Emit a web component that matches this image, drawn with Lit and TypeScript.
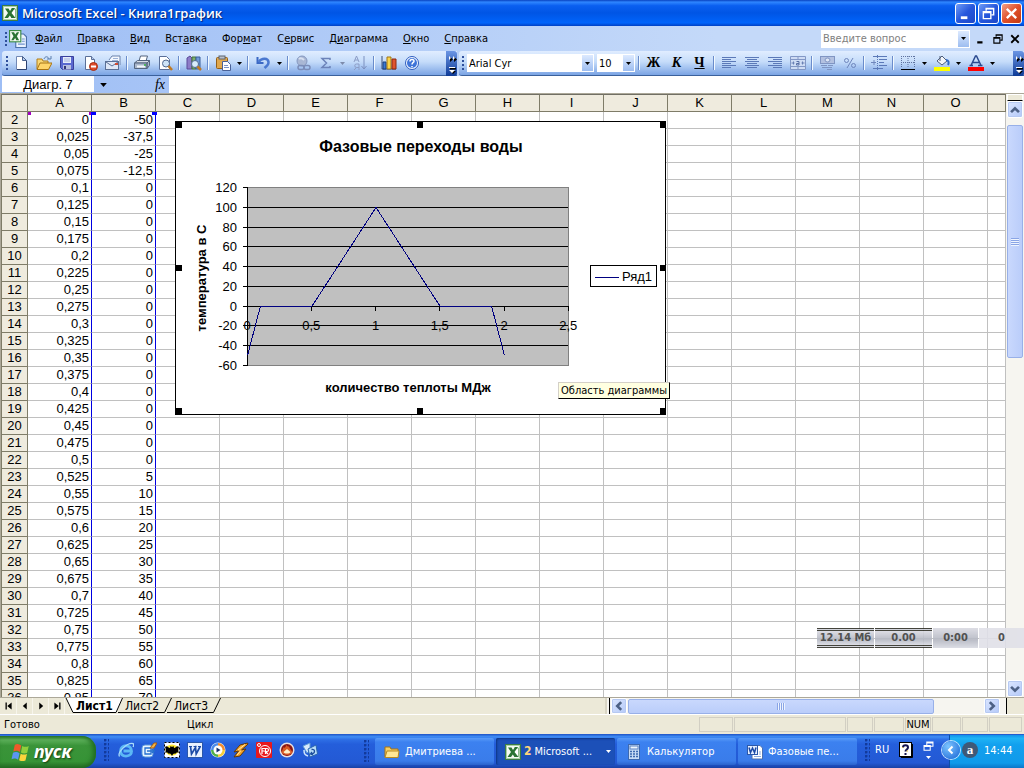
import { LitElement, html, svg, css } from "lit";
import { customElement, state } from "lit/decorators.js";
import { classMap } from "lit/directives/class-map.js";

const glyphs: Record<string, unknown> = {
  excel: svg`<rect x=".5" y=".5" width="15" height="15" fill="#f4faf2" stroke="#3c7c45"/><rect x="1.500" y="1.500" width="13" height="13" fill="none" stroke="#a9cfa6"/><path d="M9 4h4.500v8.500H9" fill="#fff" stroke="#8db98d"/><path d="M3 3.500h3.500L8 6l2-3h3l-3.500 5 4 5H9.500L7.800 10.500 6 13H2.500L6 8z" fill="#2a7333"/>`,
  book: svg`<path d="M6 3.500h7l2.500 2.500v9.500H6z" fill="#eaf2ff" stroke="#4a6fa8"/><path d="M11.500 8H14M11.500 10H14M8 12.500h6" stroke="#6f92cc"/><rect x=".5" y=".5" width="10" height="10" fill="#f4faf2" stroke="#3c8c45"/><path d="M2 2h2.500l1 2 1.500-2h2L7 5.500 9 9H6.500l-1-2-1.500 2H2l2-3.500z" fill="#2a7333"/>`,
  new: svg`<path d="M3.500 1.500h6l4 4v9h-10z" fill="#fff" stroke="#7288b4"/><path d="M9.500 1.500v4h4z" fill="#b7cdf2" stroke="#48608c"/><path d="M4 14.500h9.500V6" stroke="#2c4270" fill="none"/>`,
  open: svg`<path d="M1 14V4h5l1 2h5v2" fill="#f8d775" stroke="#b07d1a"/><path d="M1 14.500L4 8h12l-3.500 6.500z" fill="#ffd56a" stroke="#a87414"/><path d="M8 4c1-3 4-3 5 0M11 4h4V1" fill="none" stroke="#5d7fae"/>`,
  save: svg`<path d="M1.500 1.500h13v13h-11l-2-2z" fill="#5a68cf" stroke="#3a3f9c"/><rect x="4" y="2" width="8" height="6" fill="#e6ecfb"/><path d="M5 4h6M5 6h6" stroke="#a4b2dd"/><rect x="4" y="10" width="8" height="4.500" fill="#b7bedf"/><rect x="5" y="11" width="2" height="3" fill="#303577"/>`,
  perm: svg`<path d="M3.500 1.500h6l3 3v10h-9z" fill="#fff" stroke="#5a6f98"/><path d="M9.500 1.500v3h3" fill="#b7cdf2" stroke="#5a6f98"/><circle cx="11.500" cy="11.500" r="4" fill="#df4b2a" stroke="#a52d14"/><path d="M9 11.500h5" stroke="#fff" stroke-width="2"/>`,
  mail: svg`<path d="M4 5l3-4h8v9" fill="#f4f8ff" stroke="#6b82ab"/><path d="M8 3.500h5M7 5.500h6" stroke="#9db2d6"/><rect x=".5" y="6.500" width="13" height="8" fill="#dfe8f7" stroke="#5b7096"/><path d="M1 7l6 4 6-4" fill="none" stroke="#5b7096"/><rect x="10" y="8" width="3" height="2" fill="#d24b32"/>`,
  print: svg`<path d="M5 6l1.500-5h7L12 6" fill="#fff" stroke="#54647e"/><path d="M.5 8l3-2.500h12l-2 2.500z" fill="#d8dee8" stroke="#54647e"/><path d="M.5 8h12.500v5.500H.5zM13 8l2.500-2.500v5l-2.500 3z" fill="#aab7cc" stroke="#54647e"/><path d="M3 11.500h8" stroke="#f4f7fb" stroke-width="2"/><path d="M10 10h2" stroke="#2fae3a" stroke-width="1.500"/>`,
  preview: svg`<path d="M2.500 1.500h7l3 3v10h-10z" fill="#fff" stroke="#5a6f98"/><circle cx="9" cy="8.500" r="3.500" fill="#cfe4f7" stroke="#51698f"/><path d="M11.500 11l3.500 4" stroke="#c17a22" stroke-width="2.500"/>`,
  research: svg`<path d="M1 3l3-2 2 2v11H1z" fill="#8d7cc8" stroke="#5a4a99"/><path d="M6 2h4v12H6z" fill="#7fb06c" stroke="#42733a"/><path d="M10 2h4v12h-4z" fill="#6e9ad8" stroke="#395e9c"/><circle cx="9" cy="9" r="3.500" fill="#d8ecfa" stroke="#51698f"/><path d="M11.500 11.500l3.500 3.500" stroke="#c17a22" stroke-width="2.500"/>`,
  paste: svg`<rect x="1.500" y="2.500" width="11" height="11" rx="1" fill="#e0a84e" stroke="#946018"/><rect x="4" y="1" width="6" height="3" fill="#b9bfc9" stroke="#5c6470"/><path d="M7.500 6.500h5l3 3v6h-8z" fill="#fff" stroke="#4a6298"/><path d="M9 10.500h4M9 12.500h5" stroke="#7892c6"/>`,
  undo: svg`<path d="M2.500 2v6h6" fill="none" stroke="#3b68c4" stroke-width="2"/><path d="M3.500 7C7 2.500 13 3 13.500 7c.4 3-2 4-4 6" fill="none" stroke="#4a78d0" stroke-width="2.500"/>`,
  link: svg`<circle cx="7" cy="6" r="5" fill="#a9b7d4" stroke="#8598c0"/><path d="M4 4c2-2 4 0 5 1" stroke="#d8e0f0" stroke-width="2" fill="none"/><rect x="3" y="10.500" width="6" height="4" rx="2" fill="none" stroke="#7b8db8" stroke-width="1.500"/><rect x="9" y="10.500" width="6" height="4" rx="2" fill="none" stroke="#7b8db8" stroke-width="1.500"/>`,
  sum: svg`<path d="M12 5V3.500H4L8.500 8 4 12.500h8V11" fill="none" stroke="#6c83b9" stroke-width="1.500"/>`,
  sort: svg`<path d="M2 7l2.500-6L7 7M3 5h3M7 15V9H4.500a1.500 1.500 0 0 0 0 3.500H7M4.500 12.500L2 15" fill="none" stroke="#8c9dc6"/><path d="M12 1v13M9.500 11l2.500 3 2.500-3" fill="none" stroke="#7d91c0"/>`,
  chart: svg`<path d="M1 1v13h14" stroke="#3c5078" fill="none"/><path d="M2 7h3v7H2z" fill="#3b78d4" stroke="#1c4380"/><path d="M6 2h4v12H6z" fill="#fbd54a" stroke="#a07413"/><path d="M11 4h4v10h-4z" fill="#e0532f" stroke="#8c2a10"/>`,
  help: svg`<circle cx="8" cy="8" r="6.500" fill="#f2f7ff" stroke="#2e5dc0"/><circle cx="8" cy="8" r="5" fill="#3f74d8"/><path d="M6 6.500C6 4 10 4 10 6.200 10 7.500 8 7.500 8 9.500M8 11v1.200" fill="none" stroke="#fff" stroke-width="1.500"/>`,
  left: svg`<path d="M1 2.500h14M1 4.500h9M1 6.500h14M1 8.500h9M1 10.500h14M1 12.500h9" stroke="#5b79b8"/>`,
  center: svg`<path d="M1 2.500h14M3 4.500h10M1 6.500h14M3 8.500h10M1 10.500h14M3 12.500h10" stroke="#5b79b8"/>`,
  right: svg`<path d="M1 2.500h14M6 4.500h9M1 6.500h14M6 8.500h9M1 10.500h14M6 12.500h9" stroke="#5b79b8"/>`,
  merge: svg`<path d="M.5 1.500h15v13H.5zM.5 4.500h15M.5 11.500h15M8 1.500v3M8 11.500v3" fill="#cfdcf4" stroke="#8398c6"/><path d="M1.500 8h3M3.500 6.500v3M14.500 8h-3M12.500 6.500v3" stroke="#6a80b4"/><path d="M6.500 6.500h2.500v3.500H6.500V8.500H9" fill="none" stroke="#5a70a6"/>`,
  money: svg`<rect x="1.500" y="1.500" width="14" height="7" fill="#b3c1e0" stroke="#8095c3"/><ellipse cx="8.500" cy="5" rx="2.500" ry="2" fill="#dde6f6" stroke="#8095c3"/><path d="M2 10.500h6M3 12.500h5M8 12.500h5M8 14.500h5M9 10.500h5" stroke="#8095c3"/>`,
  percent: svg`<circle cx="4.500" cy="5.500" r="2" fill="none" stroke="#6f86bc"/><circle cx="11.500" cy="10.500" r="2" fill="none" stroke="#6f86bc"/><path d="M11 3L5 13" stroke="#6f86bc"/>`,
  indent: svg`<path d="M2 1.500h14M2 13.500h10M8 4.500h8M8 7.500h5M8 10.500h8" stroke="#5b79b8"/><path d="M6.500 0v15" stroke="#5b79b8" stroke-dasharray="1 1"/><path d="M0 7.500h5M3 5v5" stroke="#6f86bc"/>`,
  borders: svg`<path d="M1.500 1v12M8 1v12M14.500 1v12M1 1.500h14M1 7.500h14" stroke="#5f73a0" stroke-dasharray="1 1" fill="none"/><path d="M1 14.500h14" stroke="#000"/>`,
  fill: svg`<path d="M3 6l5-5 5 5-5 4z" fill="#f3f6fb" stroke="#4f5f7c"/><path d="M6 1v5" stroke="#4f5f7c"/><path d="M12 5c3 0 3 3 2 5" fill="none" stroke="#2b67c6" stroke-width="2"/><rect y="12" width="16" height="4" fill="#ff0"/>`,
  fontcolor: svg`<path d="M3 10.500L7.500 1h1L13 10.500M5 7.500h6M1.500 10.500H5M10 10.500h4.500" fill="none" stroke="#2b4a8f" stroke-width="1.500"/><rect y="12" width="16" height="4" fill="red"/>`,
  folder: svg`<path d="M1 13V3h5l1 2h7v8z" fill="#f5cf62" stroke="#a87414"/><path d="M1 13.500L3 7h12l-1 6.500z" fill="#ffe795" stroke="#b98a22"/>`,
  calc: svg`<rect x="2.500" y=".5" width="11" height="15" fill="#c9dcf5" stroke="#3e69b0"/><rect x="4" y="2" width="8" height="3" fill="#eef6ff" stroke="#5a82c4"/><path d="M4 7.500h8M4 10h8M4 12.500h8" stroke="#3e69b0" stroke-dasharray="2 1" stroke-width="1.500"/>`,
  word: svg`<path d="M5 1.500h8l2.500 2.500v11H5z" fill="#fff" stroke="#4a6fb0"/><path d="M12 8h2M12 10h2M7 12.500h7" stroke="#8daade"/><rect x=".5" y="1.500" width="10" height="9" fill="#e4eeff" stroke="#2b57a8"/><path d="M2 3.500l1.500 5L5.500 4l2 4.500 1.500-5" fill="none" stroke="#1c4aa6" stroke-width="1.500"/>`,
  ie: svg`<path d="M13.500 10.500C12.500 15 3 16 2.500 9 2.500 2 13.500 2 13.500 9H5.500" fill="none" stroke="#5cb8f5" stroke-width="2.800"/><path d="M1.500 14.500C-1 10 9 1 14.500 1.500c1.500 0 1.500 2 .5 3.500" fill="none" stroke="#a9dcfa" stroke-width="1.300"/>`,
  outlook: svg`<rect x="1" y="3" width="11" height="12" rx="3" fill="#e8f4ff" stroke="#5f9bd8"/><path d="M4 6h6v6H4zM6 9h7M11 7l2.500 2L11 11" fill="none" stroke="#246fd0" stroke-width="1.300"/><path d="M9 6l4-5h3l-3 5z" fill="#f6b544" stroke="#a65d14"/>`,
  bat: svg`<rect x=".5" y=".5" width="15" height="15" fill="#fff" stroke="#000" stroke-dasharray="2 2"/><ellipse cx="8" cy="8" rx="6.500" ry="5.500" fill="#ffe92e"/><path d="M1 5c2-2 3 1 5 1l.5-2L8 5l1.500-1 .5 2c2 0 3-3 5-1-1 2-1 4 0 6-2-1-3 0-4 1-1-1-2 0-3 2-1-2-2-3-3-2-1-1-2-2-4-1 1-2 1-4 0-6z" fill="#000"/>`,
  wordapp: svg`<rect x=".5" y=".5" width="15" height="15" fill="#e9f1ff" stroke="#2b57a8"/><path d="M2 4.500h3M6.500 4.500h3M11 4.500h3" stroke="#1c4aa6"/><path d="M3.500 4.500l1 7.500 4-6.500.7 6.500 4-7.500" fill="none" stroke="#1c4aa6" stroke-width="1.700"/>`,
  player: svg`<circle cx="8" cy="8" r="7.500" fill="#eef4fb"/><path d="M8 1a7 7 0 0 1 7 7H8z" fill="#f08a2c"/><path d="M1 8a7 7 0 0 1 7-7v7z" fill="#4c8be8"/><path d="M1 8a7 7 0 0 0 7 7V8z" fill="#53b04a"/><path d="M15 8a7 7 0 0 1-7 7V8z" fill="#f6cd38"/><circle cx="8" cy="8" r="4.500" fill="#fff"/><path d="M6.500 5.500v5l4-2.500z" fill="#16306c"/>`,
  bolt: svg`<path d="M14.500 1L7 3 1 10l4.500-1L1 15l6-1 6-7-4.500 1 6.500-6z" fill="#f6a52a" stroke="#5f3608"/><path d="M12 2.500L5 8M8 8.500L4 13" stroke="#ffe9b0"/>`,
  red: svg`<rect width="16" height="16" rx="1" fill="#e8181c"/><circle cx="9" cy="9" r="5.500" fill="none" stroke="#fff"/><circle cx="3" cy="3" r="1.500" fill="none" stroke="#fff"/><path d="M6 12V6.500h3M6 9h2.500M9.500 12V6.500h1.500c2 0 2 3 0 3H9.500l2.500 2.500" fill="none" stroke="#fff" stroke-width="1.200"/>`,
  flame: svg`<circle cx="8" cy="8" r="7.500" fill="#e7dfe0"/><circle cx="8" cy="8" r="6" fill="#8a1512"/><path d="M2.500 10c1-2 1-2 2-5 1 2 2 0 3-2 1 3 3 0 3 3l3 4c-1 4-10 4-11 0z" fill="#d95a22"/><path d="M4.500 10l3.500-3 3.500 3c-1 2-6 2-7 0z" fill="#fff0c8"/>`,
  sync: svg`<path d="M1 4l7-3v8L5 11z" fill="#d7e9fb" stroke="#5e9bd8"/><path d="M6 7l8-4 1.500 9L8 15z" fill="#b8dcf8" stroke="#2864ae"/><path d="M2 8c0 4 1 5 4 6" fill="none" stroke="#cfe6fb" stroke-width="1.500"/><path d="M9.500 7.500c4-1 4 4 0 4.500M10 10l-1.500 2 2.500 1" fill="none" stroke="#1b4d9c" stroke-width="1.300"/>`,
  flag: svg`<path d="M4 2.500C6 1 8 2 9.500 3L8.300 8.500C7 7.500 5 7 2.800 8z" fill="#ee5a2a"/><path d="M10.300 3.300c2 1 3.500 1 5.500 0L14.500 9c-2 1-3.500.8-5.300-.2z" fill="#8fcf3c"/><path d="M2.500 9C4.500 8 6.500 8.500 8 9.500L6.800 15c-1.500-1-3.500-1.500-5.500-.5z" fill="#5b96f2"/><path d="M9 9.800c1.800 1 3.500 1 5.300.2L13 15.500c-2 1-3.500.8-5.300-.2z" fill="#fcd43c"/>`,
  query: svg`<rect x="1.500" y=".5" width="12" height="14" fill="#fff" stroke="#000"/><path d="M14.500 2v13.500H3" fill="none" stroke="#000"/><path d="M5 5.500c0-3 5-3 5 0 0 2-2.500 2-2.500 4M7.500 11v2" fill="none" stroke="#141450" stroke-width="2"/><path d="M4 5.500h1M8.500 9h1.500" stroke="#e8c53a"/>`,
  windows: svg`<path d="M5.500 1.500h9v6h-9zM5 3h10M1.500 6.500h9v7h-9zM1 8h10" fill="none" stroke="currentColor" stroke-width="1.500"/>`,
  first: svg`<path d="M4 4h1.500v8H4zM11 4v8L6 8z" fill="#000"/>`,
  prev: svg`<path d="M10 4v8L5.500 8z" fill="#000"/>`,
  next: svg`<path d="M6 4v8l4.500-4z" fill="#000"/>`,
  last: svg`<path d="M10.500 4H12v8h-1.500zM5 4v8l5-4z" fill="#000"/>`,
  up: svg`<path d="M3.500 10.500L8 6l4.500 4.500" fill="none" stroke="#4d6185" stroke-width="3"/>`,
  down: svg`<path d="M3.500 5.500L8 10l4.500-4.500" fill="none" stroke="#4d6185" stroke-width="3"/>`,
  back: svg`<path d="M10.500 3.500L6 8l4.500 4.500" fill="none" stroke="#4d6185" stroke-width="3"/>`,
  forth: svg`<path d="M5.500 3.500L10 8l-4.500 4.500" fill="none" stroke="#4d6185" stroke-width="3"/>`,
  min: svg`<path d="M3 12.500h7" stroke="currentColor" stroke-width="3"/>`,
  restore: svg`<path d="M5.500 5V2.500h8v7H11M5 3h9" fill="none" stroke="currentColor" stroke-width="1.500"/><path d="M2.500 6h8v7.500h-8zM2 7h9" fill="none" stroke="currentColor" stroke-width="1.500"/>`,
  close: svg`<path d="M3 3l10 10M13 3L3 13" stroke="currentColor" stroke-width="2.500"/>`,
};

const icon = (name: string, size = 16) =>
  html`<svg width=${size} height=${size} viewBox="0 0 16 16" aria-hidden="true">${glyphs[name]}</svg>`;

const arrow = html`<svg width="5" height="3" viewBox="0 0 5 3" aria-hidden="true"><path d="M0 0h5L2.500 3z" fill="currentColor" /></svg>`;

const overflowMark = html`<svg width="10" height="20" viewBox="0 0 10 20" aria-hidden="true">
  <path d="M3 3l3 2.500L3 8zM7 3l3 2.500L7 8zM3 14h6v1.500H3zM3 17h6l-3 3z" fill="#000" />
  <path d="M2 2l2 2-2 2zM6 2l2 2-2 2zM2 13h6v1H2zM2 16h6l-3 3z" fill="#fff" /></svg>`;

type Tool = [kind: string, label?: string];

const standardTools: Tool[] = [
  ["new", "Создать"], ["open", "Открыть"], ["save", "Сохранить"], ["perm", "Разрешения"], ["mail", "Сообщение"], ["|"],
  ["print", "Печать"], ["preview", "Просмотр"], ["|"], ["research", "Справочники"], ["|"],
  ["paste", "Вставить"], ["v", "Параметры вставки"], ["|"], ["undo", "Отменить"], ["v", "Список отмены"], ["|"],
  ["link", "Гиперссылка"], ["sum", "Автосумма"], ["v-", "Функции"], ["sort", "Сортировка"], ["|"],
  ["chart", "Мастер диаграмм"], ["help", "Справка"],
];

const formatTools: Tool[] = [
  ["|"], ["Ж", "Полужирный"], ["К", "Курсив"], ["Ч", "Подчеркнутый"], ["|"],
  ["left", "По левому краю"], ["center", "По центру"], ["right", "По правому краю"], ["merge", "Объединить"], ["|"],
  ["money", "Денежный формат"], ["percent", "Процентный формат"], ["|"], ["indent", "Отступ"], ["|"],
  ["borders", "Границы"], ["v", "Виды границ"], ["fill", "Цвет заливки"], ["v", "Палитра заливки"],
  ["fontcolor", "Цвет шрифта"], ["v", "Палитра шрифта"],
];

const drawTool = ([kind, label]: Tool) => {
  if (kind === "|") return html`<span class="sep"></span>`;
  if (kind[0] === "v") return html`<button class=${classMap({ drop: true, dim: kind === "v-" })} aria-label=${label}>${arrow}</button>`;
  if ("ЖКЧ".includes(kind))
    return html`<button class=${classMap({ tool: true, letter: true, italic: kind === "К", under: kind === "Ч" })} aria-label=${label}>${kind}</button>`;
  return html`<button class="tool" aria-label=${label}>${icon(kind)}</button>`;
};

const base = css`
  * { box-sizing: border-box; }
  button { font: inherit; color: inherit; padding: 0; margin: 0; border: 0; background: none; display: flex; align-items: center; justify-content: center; flex: none; }
  svg { display: block; flex: none; }
  a { color: inherit; text-decoration: none; }
`;

@customElement("excel-toolbars")
class ExcelToolbars extends LitElement {
  static styles = [base, css`
    :host { display: block; background: linear-gradient(90deg, #9ebef5, #c4d9f9 70%); }
    .menu { display: flex; align-items: center; height: 25px; padding-left: 5px; }
    .grip { width: 2px; height: 14px; flex: none; background: repeating-linear-gradient(#2f4f9c 0 2px, transparent 2px 4px); }
    .menu .book { margin: 0 8px 0 2px; }
    nav { display: flex; gap: 15px; flex: 1; }
    u { text-underline-offset: 1px; }
    .ask { display: flex; align-items: center; height: 18px; width: 149px; background: #fff; }
    .ask input { flex: 1; min-width: 0; border: 0; padding: 0 2px; outline: 0; font: inherit; background: none; height: 16px; }
    .ask input::placeholder { color: #808080; opacity: 1; }
    .picker { width: 11px; align-self: stretch; margin: 1px; background: linear-gradient(#ddeaff, #9dbdf0); }
    .doc { display: flex; gap: 5px; padding: 0 3px 0 5px; }
    .bars { display: flex; height: 25px; gap: 2px; padding-left: 2px; }
    .bar { display: flex; align-items: center; background: linear-gradient(#e0edff, #c5dcfa 45%, #7ba4e4); border-bottom: 1px solid #3b619c; border-radius: 3px 0 0 3px; padding-left: 4px; }
    .std { width: 455px; flex: none; }
    .fmt { flex: 1; min-width: 0; padding-left: 3px; }
    .std .grip { margin-right: 1px; }
    .tool { width: 23px; height: 22px; }
    .drop { width: 11px; height: 22px; }
    .dim { color: #7d8bab; }
    .letter { font: bold 14px "Liberation Serif", serif; }
    .italic { font-style: italic; }
    .under { text-decoration: underline; }
    .sep { width: 2px; height: 14px; margin: 0 2px; flex: none; border-left: 1px solid #6a8ccb; border-right: 1px solid #f1f9ff; }
    .more { margin-left: auto; width: 11px; height: 25px; margin-bottom: -1px; background: linear-gradient(#6b95e4, #0d3a96); border-radius: 0 3px 3px 0; }
    .combo { display: flex; height: 18px; background: #fff; align-items: center; margin-left: 3px; }
    .combo select { flex: 1; min-width: 0; appearance: none; border: 0; background: none; padding: 0 0 0 2px; font: inherit; color: #000; outline: 0; }
    .size { width: 38px; margin-right: 1px; }
    .family { width: 127px; }
    .formula { display: flex; height: 17px; padding-left: 2px; }
    .formula input { border: 0; outline: 0; background: #fff; padding: 0; }
    .formula .name { width: 92px; height: 16px; text-align: center; font: 13px "Liberation Sans", sans-serif; }
    .namedrop { width: 18px; }
    .namedrop svg { width: 7px; height: 4px; }
    .fx { margin-left: auto; width: 18px; font: italic 14px "Liberation Serif", serif; }
    .left { display: flex; width: 75px; flex: none; }
    .expr { flex: 1; min-width: 0; }
  `];

  render() {
    const menus = [["", "Ф", "айл"], ["", "П", "равка"], ["", "В", "ид"], ["Вст", "а", "вка"], ["Фор", "м", "ат"], ["С", "е", "рвис"], ["Д", "и", "аграмма"], ["", "О", "кно"], ["", "С", "правка"]];
    return html`
      <div class="menu">
        <span class="grip"></span><span class="book">${icon("book", 18)}</span>
        <nav>${menus.map(([a, b, c]) => html`<a href="#">${a}<u>${b}</u>${c}</a>`)}</nav>
        <div class="ask"><input aria-label="Вопрос" placeholder="Введите вопрос" /><button class="picker" aria-label="Список вопросов">${arrow}</button></div>
        <div class="doc">
          <button aria-label="Свернуть книгу">${icon("min", 12)}</button>
          <button aria-label="Восстановить книгу">${icon("restore", 12)}</button>
          <button aria-label="Закрыть книгу">${icon("close", 12)}</button>
        </div>
      </div>
      <div class="bars">
        <div class="bar std"><span class="grip"></span>${standardTools.map(drawTool)}
          <button class="more" aria-label="Другие кнопки">${overflowMark}</button></div>
        <div class="bar fmt"><span class="grip"></span>
          <span class="combo family"><select aria-label="Шрифт"><option>Arial Cyr</option></select><button class="picker" aria-label="Список шрифтов">${arrow}</button></span>
          <span class="combo size"><select aria-label="Размер"><option>10</option></select><button class="picker" aria-label="Список размеров">${arrow}</button></span>
          ${formatTools.map(drawTool)}
          <button class="more" aria-label="Другие кнопки форматирования">${overflowMark}</button></div>
      </div>
      <div class="formula">
        <input class="name" aria-label="Имя" value="Диагр. 7" />
        <span class="left"><button class="namedrop" aria-label="Список имён">${arrow}</button><button class="fx" aria-label="Вставка функции">fx</button></span>
        <input class="expr" aria-label="Строка формул" />
      </div>`;
  }
}

@customElement("phase-chart")
class PhaseChart extends LitElement {
  static styles = [base, css`
    :host { display: block; background: #fff; border: 1px solid #000; }
    text { font: 13px "Liberation Sans", sans-serif; fill: #000; }
    .title { font-size: 16px; font-weight: bold; }
    .bold { font-weight: bold; }
    .end { text-anchor: end; }
    .mid { text-anchor: middle; }
    .axis { stroke: #000; fill: none; shape-rendering: crispEdges; }
    .frame { stroke: #808080; fill: #c0c0c0; shape-rendering: crispEdges; }
    .series { stroke: #000080; fill: none; shape-rendering: crispEdges; }
    .box { stroke: #000; fill: #fff; shape-rendering: crispEdges; }
  `];

  render() {
    const x = (v: number) => 71 + v * 128.5;
    const y = (v: number) => Math.round(65 + (120 - v) * 0.989) + 0.5;
    const levels = [120, 100, 80, 60, 40, 20, 0, -20, -40, -60];
    const marks = [0, 0.5, 1, 1.5, 2, 2.5];
    const points = [[0, -50], [0.1, 0], [0.5, 0], [1, 100], [1.5, 0], [1.9, 0], [2, -50]];
    const handles = [0, 241, 484].flatMap((hx) => [0, 143, 286].map((hy) => [hx, hy])).filter(([hx, hy]) => hx !== 241 || hy !== 143);
    return html`<svg width="489" height="292" viewBox="0 0 489 292" role="img" aria-label="Фазовые переходы воды">
      <rect class="frame" x="71.500" y="65.500" width="321" height="178"></rect>
      ${levels.slice(1, -1).map((v) => svg`<path class="axis" d="M67 ${y(v)}H392"/>`)}
      ${levels.map((v) => svg`<path class="axis" d="M67 ${y(v)}h4"/><text class="end" x="61" y=${y(v) + 4.5}>${v}</text>`)}
      <path class="axis" d="M71.500 65v179"></path>
      ${marks.map((v) => svg`<path class="axis" d="M${Math.floor(x(v)) + 0.5} 184v5"/><text class="mid" x=${x(v)} y="208">${String(v).replace(".", ",")}</text>`)}
      <polyline class="series" points=${points.map(([a, b]) => `${x(a) + 0.5},${y(b)}`).join(" ")}></polyline>
      <text class="title mid" x="245" y="30">Фазовые переходы воды</text>
      <text class="bold mid" x="232" y="270">количество теплоты МДж</text>
      <text class="bold mid" transform="translate(30 156) rotate(-90)">температура в С</text>
      <rect class="box" x="414.500" y="143.500" width="66" height="21"></rect>
      <path class="series" d="M419 155.500h24"></path>
      <text x="446" y="159">Ряд1</text>
      ${handles.map(([hx, hy]) => svg`<rect x=${hx} y=${hy} width="6" height="6"/>`)}
    </svg>`;
  }
}

@customElement("excel-sheet")
class ExcelSheet extends LitElement {
  static styles = [base, css`
    :host { display: flex; min-height: 0; background: #fff; }
    .grid { flex: 1; min-width: 0; position: relative; overflow: hidden; border-left: 1px solid #aca899; border-top: 1px solid #aca899; }
    table { width: 100%; table-layout: fixed; border-collapse: separate; border-spacing: 0; font: 13px/16px "Liberation Sans", sans-serif; }
    col.n { width: 27px; }
    col.c { width: 64px; }
    th, td { height: 17px; padding: 0; border-right: 1px solid #c0c0c0; border-bottom: 1px solid #c0c0c0; font-weight: normal; overflow: hidden; white-space: nowrap; }
    th { background: #efebde; border-color: #7f7c68; text-align: center; }
    thead th { height: 18px; border-top: 1px solid #716f64; }
    th:first-child { border-left: 1px solid #7f7c68; }
    td { text-align: right; padding-right: 2px; }
    .marked { border-right-color: #0000e0; }
    .object, .hint, .knob { position: absolute; }
    .object { left: 174px; top: 27px; width: 491px; height: 294px; }
    .hint { left: 557px; top: 288px; padding: 0 2px; height: 17px; line-height: 15px; background: #ffffe1; border: 1px solid #000; border-top-color: #d4d0c8; border-left-color: #d4d0c8; }
    .knob { top: 18px; height: 3px; }
    .scroll { width: 18px; flex: none; display: flex; flex-direction: column; background: #f6f5f0; border-top: 1px solid #aca899; padding: 0 1px; }
    .split { height: 7px; border: 1px solid #fff; border-bottom: 1px solid #000; background: #ece9d8; }
    .btn { width: 16px; height: 17px; border: 1px solid #fff; border-radius: 2px; background: linear-gradient(135deg, #dbe6ff, #b4c9f8); box-shadow: inset 0 0 0 1px #b6c9f2; }
    .track { flex: 1; padding-top: 7px; }
    .thumb { height: 42%; display: flex; align-items: center; justify-content: center; border-radius: 2px; background: linear-gradient(90deg, #c9d8fd, #bacdfa); border: 1px solid #98b0e8; }
    .lines { width: 8px; height: 8px; background: repeating-linear-gradient(#8aa5e6 0 1px, #eef4fe 1px 2px); }
  `];

  render() {
    const letters = [..."ABCDEFGHIJKLMNO"];
    const rows = Array.from({ length: 35 }, (_, i) => ({
      n: i + 2,
      a: String(+(i * 0.025).toFixed(3)).replace(".", ","),
      b: String(i < 4 ? -50 + i * 12.5 : Math.max(0, (i - 20) * 5)).replace(".", ","),
    }));
    const knobs = [[27, 3, "#a000c0"], [88, 3, "#a000c0"], [90, 5, "#0000ff"], [151, 5, "#0000ff"]];
    return html`
      <div class="grid">
        <table>
          <colgroup><col class="n" />${letters.map(() => html`<col class="c" />`)}<col /></colgroup>
          <thead><tr><th></th>${letters.map((l) => html`<th scope="col">${l}</th>`)}<th></th></tr></thead>
          <tbody>${rows.map((r) => html`<tr><th scope="row">${r.n}</th><td class="marked">${r.a}</td><td class="marked">${r.b}</td>${letters.slice(1).map(() => html`<td></td>`)}</tr>`)}</tbody>
        </table>
        ${knobs.map(([l, w, c]) => html`<span class="knob" style="left:${l}px;width:${w}px;background:${c}"></span>`)}
        <phase-chart class="object"></phase-chart>
        <span class="hint" role="tooltip">Область диаграммы</span>
      </div>
      <div class="scroll">
        <span class="split"></span>
        <button class="btn" aria-label="Вверх">${icon("up", 14)}</button>
        <div class="track"><div class="thumb"><span class="lines"></span></div></div>
        <button class="btn" aria-label="Вниз">${icon("down", 14)}</button>
      </div>`;
  }
}

@customElement("excel-footer")
class ExcelFooter extends LitElement {
  static styles = [base, css`
    :host { display: block; background: #ece9d8; }
    .tabs { display: flex; height: 17px; border-top: 1px solid #aca899; padding-left: 1px; align-items: stretch; }
    .step { width: 16px; border-right: 1px solid #f7f5ec; }
    .sheets { display: flex; align-items: stretch; flex: 1; }
    .sheet { position: relative; width: 49px; justify-content: flex-start; }
    .sheet svg { position: absolute; left: 0; top: 0; }
    .sheet span { position: relative; padding-left: 11px; font-size: 12px; }
    .sheet.on { font-weight: bold; z-index: 1; }
    .hscroll { display: flex; width: 419px; max-width: 50%; background: #f6f5f0; border-left: 2px solid #d8d4c3; align-items: center; }
    .hscroll .bar { width: 3px; align-self: stretch; border-right: 1px solid #000; margin-right: 1px; }
    .btn { width: 16px; height: 16px; border: 1px solid #fff; border-radius: 2px; background: linear-gradient(135deg, #dbe6ff, #b4c9f8); box-shadow: inset 0 0 0 1px #b6c9f2; }
    .track { flex: 1; height: 15px; padding-left: 1px; }
    .thumb { width: 86%; height: 15px; display: flex; align-items: center; justify-content: center; border-radius: 2px; background: linear-gradient(#c9d8fd, #bacdfa); border: 1px solid #98b0e8; }
    .lines { width: 8px; height: 7px; background: repeating-linear-gradient(90deg, #8aa5e6 0 1px, #eef4fe 1px 2px); }
    .corner { width: 18px; align-self: stretch; border-left: 1px solid #000; background: #ece9d8; margin-left: 6px; }
    .status { display: flex; height: 20px; align-items: center; border-top: 1px solid #fff; padding: 0 2px 0 4px; gap: 1px; }
    .ready { width: 182px; }
    .mode { flex: 1; }
    .cell { height: 15px; border: 1px solid #d2cfc3; text-align: center; line-height: 14px; }
  `];

  render() {
    const cells = [[34, ""], [112, ""], [26, ""], [30, ""], [26, "NUM"], [29, ""], [26, ""], [33, ""]] as const;
    return html`
      <div class="tabs">
        ${[["first", "Первый лист"], ["prev", "Предыдущий лист"], ["next", "Следующий лист"], ["last", "Последний лист"]].map(([k, l]) => html`<button class="step" aria-label=${l}>${icon(k, 14)}</button>`)}
        <div class="sheets">
          ${["Лист1", "Лист2", "Лист3"].map((s, i) => html`<button class=${classMap({ sheet: true, on: i === 0 })}>
            <svg width="60" height="16" viewBox="0 0 60 16" aria-hidden="true">
              ${i === 0
                ? svg`<path d="M1 0l7 15h43l7-15z" fill="#fff"/><path d="M1 0l7 14.500h43L57.500 0" fill="none" stroke="#000"/>`
                : svg`<path d="M4 14.500h46.500L57.500 0" fill="none" stroke="#000"/>`}
            </svg><span>${s}</span></button>`)}
        </div>
        <div class="hscroll">
          <span class="bar"></span>
          <button class="btn" aria-label="Влево">${icon("back", 14)}</button>
          <div class="track"><div class="thumb"><span class="lines"></span></div></div>
          <button class="btn" aria-label="Вправо">${icon("forth", 14)}</button>
          <span class="corner"></span>
        </div>
      </div>
      <div class="status">
        <span class="ready">Готово</span><span class="mode">Цикл</span>
        ${cells.map(([w, t]) => html`<span class="cell" style="width:${w}px">${t}</span>`)}
      </div>`;
  }
}

@customElement("task-bar")
class TaskBar extends LitElement {
  static styles = [base, css`
    :host { display: flex; align-items: stretch; height: 34px; color: #fff; background: linear-gradient(#1e52c4, #3f8df5 8%, #2e6fe6 16%, #245edb 30%, #2359d4 85%, #1941a5); }
    .start { width: 96px; gap: 5px; justify-content: flex-start; padding: 0 0 2px 10px; margin-top: 2px; border-radius: 0 14px 14px 0; background: linear-gradient(#2f7d2f, #5cb05a 12%, #3a9439 30%, #369336 80%, #256d25); font: italic bold 18px "Noto Sans", sans-serif; text-shadow: 1px 1px 2px #123d12; box-shadow: inset -3px 0 5px #1f6a1f; }
    .grip { width: 5px; height: 22px; align-self: center; flex: none; background: radial-gradient(circle at 1px 1px, #123a9c 1px, transparent 2px) 0 0 / 4px 4px; }
    .quick { display: flex; flex: none; gap: 7px; align-items: center; padding: 0 0 3px 8px; width: 268px; }
    .quick .grip { margin-right: 2px; }
    .quick + .grip { margin-right: 6px; }
    .tasks { display: flex; flex: 1; gap: 2px; padding: 4px 0 3px; min-width: 0; }
    .task { flex: 1; min-width: 0; justify-content: flex-start; gap: 5px; padding: 0 9px; white-space: nowrap; border-radius: 2px; background: linear-gradient(#5a9cf8, #3c81f0 15%, #3a7cea 85%, #2b63cc); }
    .task.on { background: #1c50b8; box-shadow: inset 1px 1px 2px #0d3484; gap: 3px; }
    .task.on svg:last-child { margin: 0 -5px 0 auto; }
    .count { color: #ffd47a; font-weight: bold; font-size: 12px; }
    .lang { display: flex; flex: none; align-items: center; gap: 9px; padding: 0 0 3px 8px; width: 92px; }
    .lang .grip { margin-right: -4px; }
    .stack { display: flex; flex-direction: column; align-items: center; gap: 4px; }
    .tray { display: flex; flex: none; align-items: center; width: 75px; margin-top: 1px; padding-bottom: 3px; background: linear-gradient(#1291ea, #1eb3f5 10%, #12a0ee 30%, #109aea 85%, #0c76c8); border-left: 1px solid #0a4fa8; }
    .expand { width: 18px; height: 18px; border-radius: 9px; margin-left: -8px; background: radial-gradient(circle at 35% 30%, #7cc4ff, #1763d4); box-shadow: 0 0 0 1px #bfe0ff; }
    .agent { width: 16px; height: 16px; border-radius: 8px; background: #3f5978; display: flex; align-items: center; justify-content: center; font: bold 13px "Liberation Serif", serif; margin-left: 2px; }
    time { margin-left: 6px; }
  `];

  @state() tasks = [["folder", "Дмитриева ..."], ["excel", "Microsoft ..."], ["calc", "Калькулятор"], ["word", "Фазовые пе..."]];

  render() {
    const quick = [["ie", "Обозреватель"], ["outlook", "Почта"], ["bat", "Бэт"], ["wordapp", "Редактор"], ["player", "Проигрыватель"], ["bolt", "Музыка"], ["red", "Запись"], ["flame", "Диск"], ["sync", "Обмен"]];
    return html`
      <button class="start">${icon("flag", 19)}пуск</button>
      <div class="quick"><span class="grip"></span>${quick.map(([k, l]) => html`<button aria-label=${l}>${icon(k)}</button>`)}</div>
      <span class="grip"></span>
      <div class="tasks">${this.tasks.map(([k, t], i) => html`<button class=${classMap({ task: true, on: i === 1 })}>
        ${icon(k)}${i === 1 ? html`<span class="count">2</span>` : ""}<span>${t}</span>${i === 1 ? arrow : ""}</button>`)}</div>
      <div class="lang"><span class="grip"></span><span>RU</span>${icon("query")}<span class="stack">${icon("windows", 11)}${arrow}</span></div>
      <div class="tray"><button class="expand" aria-label="Показать значки"><svg width="10" height="10" viewBox="0 0 10 10"><path d="M6.500 1.500L3 5l3.500 3.500" fill="none" stroke="#fff" stroke-width="2" /></svg></button><span class="agent">a</span><time>14:44</time></div>`;
  }
}

@customElement("app-root")
class AppRoot extends LitElement {
  static styles = [base, css`
    :host { display: flex; flex-direction: column; height: 100vh; min-height: 400px; overflow: hidden; position: relative; font: 11px/13px "DejaVu Sans Condensed", "DejaVu Sans", sans-serif; color: #000; }
    .title { display: flex; align-items: center; gap: 4px; height: 26px; flex: none; padding: 0 2px; color: #fff; background: linear-gradient(#0842c0, #2f86ff 8%, #0a5ff0 22%, #0055e5 50%, #0064fb 88%, #0040c4); }
    h1 { flex: 1; margin: 0; font: 600 13px "Open Sans", sans-serif; text-shadow: 1px 1px 1px #0a1f6e; }
    .win { width: 21px; height: 21px; border: 1px solid #fff; border-radius: 3px; background: linear-gradient(135deg, #6f9cf7, #2657dc 50%, #1d48c8); margin-left: -2px; }
    .win.shut { background: linear-gradient(135deg, #f0a088, #e0502a 50%, #c23a12); }
    excel-sheet { flex: 1; }
    .meter { position: absolute; right: 0; bottom: 120px; display: flex; height: 20px; gap: 1px; font-weight: bold; color: #404040; text-align: center; line-height: 14px; opacity: 0.9; }
    .meter span { width: 45px; padding: 3px 0; background: linear-gradient(#dadae2, #b4b7c2 60%, #d8dae2); }
    .meter .wide { width: 57px; padding: 0; border-top: 3px double #303028; border-bottom: 3px double #303028; }
    .meter .faint { background: #e0e0e8; }
  `];

  render() {
    return html`
      <header class="title">${icon("excel")}<h1>Microsoft Excel - Книга1график</h1>
        <button class="win" aria-label="Свернуть">${icon("min", 15)}</button>
        <button class="win" aria-label="Восстановить">${icon("restore", 15)}</button>
        <button class="win shut" aria-label="Закрыть">${icon("close", 15)}</button>
      </header>
      <excel-toolbars></excel-toolbars>
      <excel-sheet></excel-sheet>
      <excel-footer></excel-footer>
      <task-bar></task-bar>
      <div class="meter"><span class="wide">12.14 Мб</span><span class="wide">0.00</span><span>0:00</span><span class="faint">0</span></div>`;
  }
}
